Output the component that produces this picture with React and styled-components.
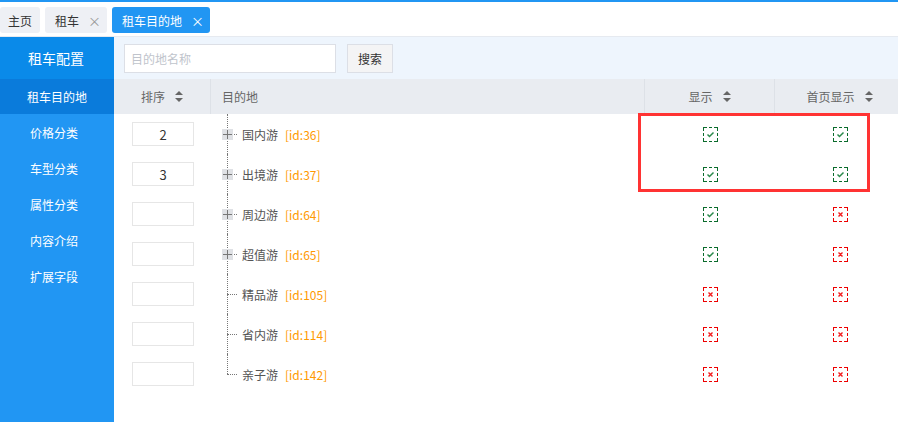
import styled, { createGlobalStyle } from "styled-components";

const GlobalStyle = createGlobalStyle`
    body {
        margin: 0;
        font-family: "Noto Sans CJK SC", "Liberation Sans", sans-serif;
        font-size: 12px;
        color: #555;
        background: #fff;
    }
`

const Page = styled.div`
    width: 898px;
    height: 422px;
    display: flex;
    flex-direction: column;
    overflow: hidden;
    border-top: 2px solid #2196f3;
    box-sizing: border-box;
`

const TabBar = styled.div`
    height: 35px;
    display: flex;
    align-items: flex-start;
    gap: 5px;
    padding-top: 5px;
    box-sizing: border-box;
    border-bottom: 1px solid #e6eaf0;
`

const Tab = styled.div`
    height: 26px;
    display: flex;
    align-items: center;
    gap: 9px;
    padding: 0 ${p => (p.$closable ? "6px" : "8px")} 0 ${p => (p.$first ? "8px" : "10px")};
    border-radius: 3px;
    background: ${p => (p.$active ? "#2196f3" : "#eef0f5")};
    color: ${p => (p.$active ? "#fff" : "#333")};
    font-size: 12px;
    span.close {
        font-size: 13px;
        color: ${p => (p.$active ? "#fff" : "#999")};
    }
`

const Body = styled.div`
    flex: 1;
    display: flex;
    min-height: 0;
`

const Sidebar = styled.div`
    width: 114px;
    background: #2196f3;
    color: #fff;
    display: flex;
    flex-direction: column;
    flex-shrink: 0;
`

const SideHead = styled.div`
    height: 42px;
    display: flex;
    align-items: center;
    justify-content: center;
    background: #0a8ae9;
    font-size: 14px;
    padding-right: 2px;
`

const SideItem = styled.div`
    height: ${p => (p.$active ? "35px" : "36px")};
    display: flex;
    align-items: center;
    justify-content: center;
    padding-right: ${p => (p.$active ? "0" : "6px")};
    background: ${p => (p.$active ? "#0a7bdb" : "transparent")};
    font-size: 12px;
`

const Main = styled.div`
    flex: 1;
    min-width: 0;
    overflow: hidden;
    position: relative;
`

const Toolbar = styled.div`
    height: 42px;
    background: #eef5fd;
    display: flex;
    align-items: center;
    gap: 11px;
    padding-left: 10px;
`

const SearchInput = styled.div`
    width: 212px;
    height: 29px;
    box-sizing: border-box;
    border: 1px solid #dcdfe6;
    background: #fff;
    color: #c0c4cc;
    display: flex;
    align-items: center;
    padding-left: 6px;
`

const SearchButton = styled.div`
    width: 46px;
    height: 29px;
    box-sizing: border-box;
    border: 1px solid #dcdfe6;
    background: #f4f4f5;
    color: #333;
    display: flex;
    align-items: center;
    justify-content: center;
`

const Grid = styled.div`
    display: grid;
    grid-template-columns: 97px 434px 130px 130px;
`

const HeadCell = styled.div`
    height: 35px;
    background: #e9ecf1;
    color: #666;
    display: flex;
    align-items: center;
    justify-content: ${p => (p.$left ? "flex-start" : "center")};
    padding-left: ${p => (p.$left ? "11px" : "0")};
    gap: 10px;
    border-right: 1px solid #dde1e7;
    &:last-child {
        border-right: none;
    }
`

const Cell = styled.div`
    height: 40px;
    display: flex;
    align-items: center;
    justify-content: center;
`

const SortBox = styled.div`
    width: 62px;
    height: 24px;
    box-sizing: border-box;
    border: 1px solid #e6e6e6;
    color: #333;
    display: flex;
    align-items: center;
    justify-content: center;
    font-size: 13px;
    margin-left: 1px;
`

const TreeCell = styled.div`
    height: 40px;
    position: relative;
    display: flex;
    align-items: center;
    padding-left: 11px;
    &::before {
        content: "";
        position: absolute;
        left: 16px;
        top: 0;
        height: ${p => (p.$last ? "20px" : "40px")};
        border-left: 1px dotted #777;
    }
`

const Joint = styled.div`
    width: 15px;
    height: 11px;
    position: relative;
    display: flex;
    align-items: center;
    margin-right: 5px;
    &::after {
        content: "";
        position: absolute;
        left: 5px;
        right: 0;
        top: 5px;
        border-top: 1px dotted #777;
    }
`

const Plus = styled.div`
    width: 11px;
    height: 11px;
    background: #dfe1e5;
    position: relative;
    z-index: 1;
    &::before, &::after {
        content: "";
        position: absolute;
        background: #777;
    }
    &::before {
        left: 1px;
        right: 1px;
        top: 5px;
        height: 1px;
    }
    &::after {
        top: 1px;
        bottom: 1px;
        left: 5px;
        width: 1px;
    }
`

const Name = styled.span`
    color: #555;
`

const IdTag = styled.span`
    color: #ff9900;
    margin-left: 7px;
`

const Highlight = styled.div`
    position: absolute;
    left: 524px;
    top: 76px;
    width: 232px;
    height: 79px;
    box-sizing: border-box;
    border: 3px solid #f33;
    pointer-events: none;
`

function SortIcon() {
    return (
        <svg width="8" height="11" viewBox="0 0 8 11">
            <path d="M4 0 L8 4 L0 4 Z M4 11 L8 7 L0 7 Z" fill="#666" />
        </svg>
    );
}

// dashed frame: corner arms 4px, middle dash 3px
const segs = [[0, 4], [6, 3], [11, 4]];

function Mark({ on }) {
    const c = on ? "#0b6b2c" : "#ee0000";
    return (
        <svg width="15" height="15" viewBox="0 0 15 15">
            {segs.map(([a, l]) => (
                <g key={a} fill={c}>
                    <rect x={a} y="0" width={l} height="1" />
                    <rect x={a} y="14" width={l} height="1" />
                    <rect x="0" y={a} width="1" height={l} />
                    <rect x="14" y={a} width="1" height={l} />
                </g>
            ))}
            {on ? (
                <path d="M4.5 7.5 L6.5 9.5 L10.5 5.5" stroke="#2b8a4c" strokeWidth="1.5" fill="none" />
            ) : (
                <path d="M5.5 5.5 L9.5 9.5 M9.5 5.5 L5.5 9.5" stroke="#f21b1b" strokeWidth="1.4" fill="none" />
            )}
        </svg>
    );
}

const rows = [
    { sort: "2", name: "国内游", id: 36, kids: true, show: true, home: true },
    { sort: "3", name: "出境游", id: 37, kids: true, show: true, home: true },
    { sort: "", name: "周边游", id: 64, kids: true, show: true, home: false },
    { sort: "", name: "超值游", id: 65, kids: true, show: true, home: false },
    { sort: "", name: "精品游", id: 105, kids: false, show: false, home: false },
    { sort: "", name: "省内游", id: 114, kids: false, show: false, home: false },
    { sort: "", name: "亲子游", id: 142, kids: false, show: false, home: false },
];

const menu = ["价格分类", "车型分类", "属性分类", "内容介绍", "扩展字段"];

export default function App() {
    return (
        <Page>
            <GlobalStyle />
            <TabBar>
                <Tab $first>主页</Tab>
                <Tab $closable>租车<span className="close">×</span></Tab>
                <Tab $closable $active>租车目的地<span className="close">×</span></Tab>
            </TabBar>
            <Body>
                <Sidebar>
                    <SideHead>租车配置</SideHead>
                    <SideItem $active>租车目的地</SideItem>
                    {menu.map(m => <SideItem key={m}>{m}</SideItem>)}
                </Sidebar>
                <Main>
                    <Toolbar>
                        <SearchInput>目的地名称</SearchInput>
                        <SearchButton>搜索</SearchButton>
                    </Toolbar>
                    <Grid>
                        <HeadCell>排序<SortIcon /></HeadCell>
                        <HeadCell $left>目的地</HeadCell>
                        <HeadCell>显示<SortIcon /></HeadCell>
                        <HeadCell>首页显示<SortIcon /></HeadCell>
                        {rows.map((r, i) => [
                            <Cell key={r.id + "s"}><SortBox>{r.sort}</SortBox></Cell>,
                            <TreeCell key={r.id + "n"} $last={i === rows.length - 1}>
                                <Joint>{r.kids && <Plus />}</Joint>
                                <Name>{r.name}</Name>
                                <IdTag>[id:{r.id}]</IdTag>
                            </TreeCell>,
                            <Cell key={r.id + "a"}><Mark on={r.show} /></Cell>,
                            <Cell key={r.id + "b"}><Mark on={r.home} /></Cell>,
                        ])}
                    </Grid>
                    <Highlight />
                </Main>
            </Body>
        </Page>
    );
}
